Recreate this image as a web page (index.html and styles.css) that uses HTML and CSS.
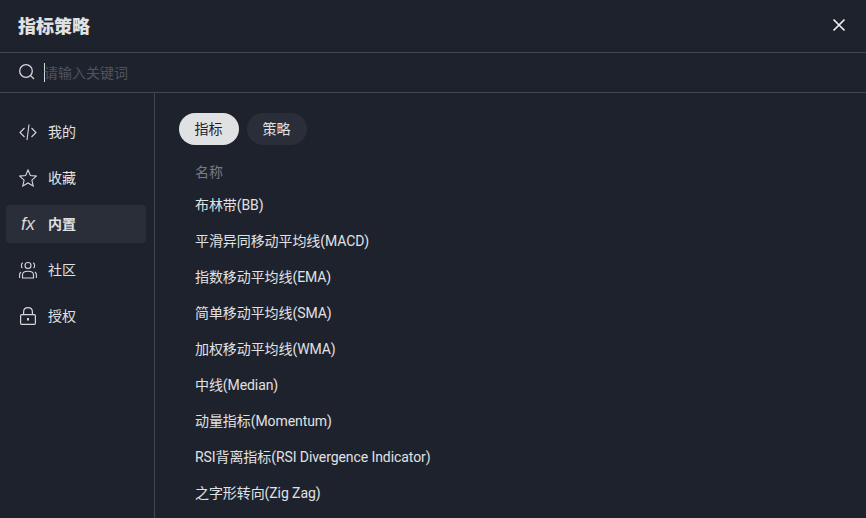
FILE: index.html
```html
<!DOCTYPE html>
<html lang="zh-CN">
<head>
  <meta charset="UTF-8" />
  <meta name="viewport" content="width=device-width, initial-scale=1.0"/>
  <title>指标策略</title>
  <link rel="stylesheet" href="styles.css">
</head>
<body>
  <div class="dialog">
    <div class="dialog-header">
      <h1>指标策略</h1>
      <svg class="close-icon" width="14" height="14" viewBox="0 0 14 14" fill="none" stroke="#eeeeef" stroke-width="1.7">
        <path d="M1.5 1.5 L12.5 12.5 M12.5 1.5 L1.5 12.5"/>
      </svg>
    </div>

    <div class="search-bar">
      <svg width="18" height="18" viewBox="0 0 18 18" fill="none" stroke="#d6d7d9" stroke-width="1.3">
        <circle cx="8" cy="8" r="6.3"/>
        <path d="M12.6 12.6 L16 16"/>
      </svg>
      <span class="caret"></span>
      <span class="placeholder">请输入关键词</span>
    </div>

    <div class="dialog-body">
      <div class="sidebar">
        <div class="nav-item">
          <svg width="18" height="18" viewBox="0 0 18 18" fill="none" stroke="#d6d7d9" stroke-width="1.1">
            <path d="M5.5 5 L1 9.5 L5.5 14 M12.5 5 L17 9.5 L12.5 14 M10 1.5 L8 17"/>
          </svg>
          <span>我的</span>
        </div>
        <div class="nav-item">
          <svg width="18" height="18" viewBox="0 0 18 18" fill="none" stroke="#d6d7d9" stroke-width="1.1">
            <path d="M9 1 L11.4 6.5 L17.4 7.1 L12.9 11.1 L14.2 17 L9 14 L3.8 17 L5.1 11.1 L0.6 7.1 L6.6 6.5 Z"/>
          </svg>
          <span>收藏</span>
        </div>
        <div class="nav-item active">
          <i class="fx-icon">fx</i>
          <span>内置</span>
        </div>
        <div class="nav-item">
          <svg width="18" height="18" viewBox="0 0 18 18" fill="none" stroke="#d6d7d9" stroke-width="1.1">
            <circle cx="9" cy="4.5" r="3"/>
            <path d="M3.5 17 V14 C3.5 11.5 6 10.2 9 10.2 C12 10.2 14.5 11.5 14.5 14 V17 Z"/>
            <path d="M3.8 1.8 C2.2 2.6 1.8 5.6 3.4 7.2 M14.2 1.8 C15.8 2.6 16.2 5.6 14.6 7.2 M0.6 17 V13.8 C0.6 12.6 1.2 11.7 2 11 M17.4 17 V13.8 C17.4 12.6 16.8 11.7 16 11"/>
          </svg>
          <span>社区</span>
        </div>
        <div class="nav-item">
          <svg width="18" height="18" viewBox="0 0 18 18" fill="none" stroke="#d6d7d9" stroke-width="1.2">
            <rect x="1.6" y="7.6" width="14.8" height="9.8" rx="1.2"/>
            <path d="M4.6 7.6 V5 C4.6 2.4 6.4 0.7 9 0.7 C11.6 0.7 13.4 2.4 13.4 5 V7.6"/>
            <path d="M9 11 V13.6" stroke-width="2"/>
          </svg>
          <span>授权</span>
        </div>
      </div>

      <div class="content">
        <div class="tabs">
          <div class="tab active">指标</div>
          <div class="tab">策略</div>
        </div>
        <div class="list-title">名称</div>
        <div class="list">
          <div class="list-row">布林带(BB)</div>
          <div class="list-row">平滑异同移动平均线(MACD)</div>
          <div class="list-row">指数移动平均线(EMA)</div>
          <div class="list-row">简单移动平均线(SMA)</div>
          <div class="list-row">加权移动平均线(WMA)</div>
          <div class="list-row">中线(Median)</div>
          <div class="list-row">动量指标(Momentum)</div>
          <div class="list-row">RSI背离指标(RSI Divergence Indicator)</div>
          <div class="list-row">之字形转向(Zig Zag)</div>
        </div>
      </div>
    </div>
  </div>
</body>
</html>
```

FILE: styles.css
```css
* { margin: 0; padding: 0; box-sizing: border-box; }

html, body {
  width: 866px;
  height: 518px;
  overflow: hidden;
}

body {
  font-family: Roboto, "Noto Sans CJK SC", sans-serif;
  background-color: #1e222d;
  color: #e0e1e3;
}

.dialog {
  display: flex;
  flex-direction: column;
  height: 518px;
}

.dialog-header {
  height: 53px;
  padding: 0 20px 2px 18px;
  display: flex;
  justify-content: space-between;
  align-items: center;
  border-bottom: 1px solid #434651;
}

.dialog-header h1 {
  font-size: 18px;
  font-weight: 900;
  color: #e0e1e3;
}

.search-bar {
  height: 40px;
  padding-left: 18px;
  padding-bottom: 1px;
  display: flex;
  align-items: center;
  border-bottom: 1px solid #434651;
}

.caret {
  width: 1px;
  height: 19px;
  margin: 0 -1px 0 8px;
  background-color: #d6d7d9;
}

.placeholder {
  font-size: 14px;
  color: #50535e;
}

.dialog-body {
  flex: 1;
  display: flex;
  min-height: 0;
}

.sidebar {
  width: 155px;
  padding: 20px 8px 0 6px;
  border-right: 1px solid #434651;
  display: flex;
  flex-direction: column;
  gap: 8px;
}

.nav-item {
  height: 38px;
  padding-left: 13px;
  display: flex;
  align-items: center;
  gap: 11px;
  font-size: 14px;
  border-radius: 4px;
}

.nav-item span {
  padding-bottom: 2px;
}

.nav-item.active {
  background-color: #2a2e39;
  font-weight: 700;
}

.fx-icon {
  width: 18px;
  font-family: "Liberation Sans", sans-serif;
  font-size: 18px;
  font-weight: 400;
  color: #d6d7d9;
  text-align: center;
}

.content {
  flex: 1;
  padding: 20px 0 0 24px;
}

.tabs {
  display: flex;
  gap: 8px;
}

.tab {
  width: 60px;
  height: 32px;
  padding: 0 1px 2px 0;
  display: flex;
  justify-content: center;
  align-items: center;
  font-size: 14px;
  border-radius: 16px;
  background-color: #2a2e39;
}

.tab.active {
  background-color: #e0e1e3;
  color: #1e222d;
}

.list-title {
  height: 41px;
  padding: 16px 0 0 16px;
  font-size: 14px;
  color: #787b86;
}

.list-row {
  height: 36px;
  padding-left: 16px;
  display: flex;
  align-items: center;
  font-size: 14px;
  letter-spacing: -0.08px;
}
```
